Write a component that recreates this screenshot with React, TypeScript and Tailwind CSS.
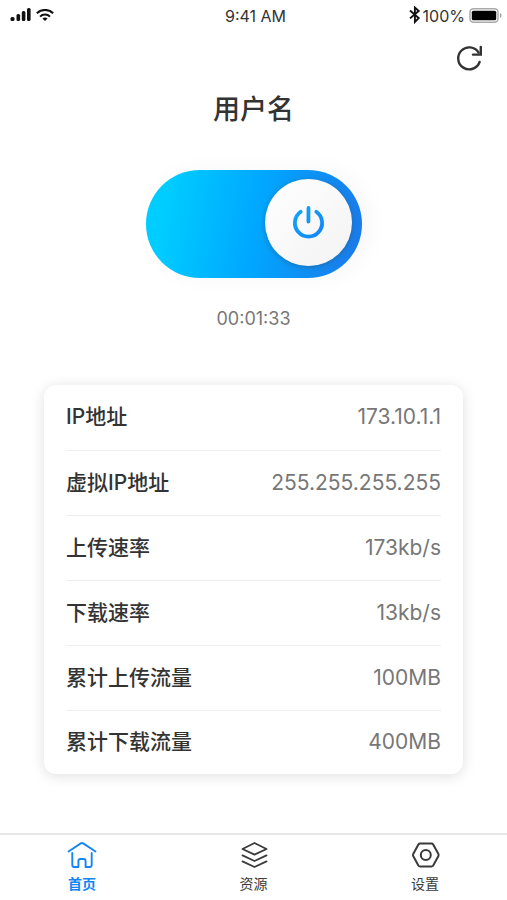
import React, { useState } from 'react';

const stats = [
  { label: 'IP地址', value: '173.10.1.1' },
  { label: '虚拟IP地址', value: '255.255.255.255' },
  { label: '上传速率', value: '173kb/s' },
  { label: '下载速率', value: '13kb/s' },
  { label: '累计上传流量', value: '100MB' },
  { label: '累计下载流量', value: '400MB' },
];

const StatusBar: React.FC = () => (
  <div className="grid grid-cols-3 items-center h-8 pl-2 pr-1 text-base text-[#333]">
    <div className="flex items-center gap-1">
      {/* Signal */}
      <svg width="24" height="16" viewBox="0 0 24 16" fill="#111">
        <rect x="2.5" y="9" width="4" height="4" rx="1.5" />
        <rect x="8.5" y="6" width="3.6" height="7" rx="1.5" />
        <rect x="13.8" y="3" width="3.6" height="10" rx="1.5" />
        <rect x="19" y="0" width="3.6" height="13" rx="1.5" />
      </svg>
      {/* Wifi */}
      <svg width="18" height="14" viewBox="0 0 18 14" fill="none" stroke="#111" strokeWidth="2">
        <path d="M0.8 4.2C5.4 -0.2 12.6 -0.2 17.2 4.2" />
        <path d="M4 7.6C6.8 4.8 11.2 4.8 14 7.6" />
        <path d="M9 12L6.4 9.4C8 8.2 10 8.2 11.6 9.4Z" fill="#111" stroke="none" />
      </svg>
    </div>
    <div className="text-center whitespace-nowrap">9:41 AM</div>
    <div className="flex items-center justify-end">
      {/* Bluetooth */}
      <svg width="12" height="20" viewBox="0 0 12 20" fill="none" stroke="#111" strokeWidth="1.9">
        <path d="M1 4.5L9.7 12.1L5.9 15.9V1.6L9.7 5L1 12.4" />
      </svg>
      <span className="ml-0.5">100%</span>
      {/* Battery */}
      <svg className="ml-1" width="34" height="16" viewBox="0 0 34 16">
        <rect x="1" y="0.8" width="28" height="13.4" rx="3.5" fill="#fff" stroke="#aaa" strokeWidth="1.5" />
        <rect x="2.8" y="2.8" width="24.4" height="9.4" rx="1.5" fill="#000" />
        <path d="M31 5C33 6 33 9 31 10Z" fill="#999" />
      </svg>
    </div>
  </div>
);

const PowerSwitch: React.FC<{ on: boolean; onToggle: () => void }> = ({ on, onToggle }) => (
  <button
    type="button"
    role="switch"
    aria-checked={on}
    aria-label="连接"
    onClick={onToggle}
    className={`flex items-start w-54 h-27 px-2.5 pt-[9px] rounded-full shadow-[8px_0_24px_rgba(0,0,0,0.04)] ${on ? 'justify-end bg-linear-[100deg,#00cdff_10%,#00a8ff_50%,#1a7cea_95%]' : 'justify-start bg-gray-300'}`}
  >
    <span className="flex items-center justify-center size-[87px] rounded-full bg-linear-to-br from-white to-[#f3f3f4] shadow-[0_1px_5px_rgba(60,60,60,0.4)]">
      <svg width="34" height="34" viewBox="0 0 34 34" fill="none" stroke="url(#power)" strokeWidth="3.8" strokeLinecap="round">
        <defs>
          <linearGradient id="power" gradientUnits="userSpaceOnUse" x1="2" y1="4" x2="32" y2="32">
            <stop offset="0%" stopColor="#12a4fb" />
            <stop offset="100%" stopColor="#1484f6" />
          </linearGradient>
        </defs>
        <path d="M17.5 2L17.4 15.5" />
        <path d="M9.7 5.8A13.6 13.6 0 1 0 25.3 5.8" />
      </svg>
    </span>
  </button>
);

const HomeIcon = () => (
  <svg width="30" height="28" viewBox="0 0 30 28" fill="none" stroke="currentColor" strokeWidth="1.9" strokeLinecap="round" strokeLinejoin="round">
    <path d="M1.5 10.5L13.8 2.4Q15 1.6 16.2 2.4L28.5 10.5" />
    <path d="M5.3 12V24Q5.3 26 7.3 26H11.4V20Q11.4 18 13.4 18H16.6Q18.6 18 18.6 20V26H22.7Q24.7 26 24.7 24V12" />
  </svg>
);

const LayersIcon = () => (
  <svg width="30" height="28" viewBox="0 0 30 28" fill="none" stroke="currentColor" strokeWidth="1.8" strokeLinecap="round" strokeLinejoin="round">
    <path d="M15.5 2L27.5 8L15.5 13.6L3.5 8Z" />
    <path d="M3.5 14.4L15.5 20L27.5 14.4" />
    <path d="M3.5 20.4L15.5 26L27.5 20.4" />
  </svg>
);

const SettingsIcon = () => (
  <svg width="30" height="28" viewBox="0 0 30 28" fill="none" stroke="currentColor" strokeWidth="2" strokeLinejoin="round">
    <path d="M10.2 2.4H21.4Q22.6 2.4 23.2 3.4L28.4 13Q28.8 14 28.4 15L23.2 24.6Q22.6 25.6 21.4 25.6H10.2Q9 25.6 8.4 24.6L3.2 15Q2.8 14 3.2 13L8.4 3.4Q9 2.4 10.2 2.4Z" />
    <circle cx="15.8" cy="14" r="5" />
  </svg>
);

const tabs = [
  { id: 'home', label: '首页', Icon: HomeIcon },
  { id: 'resource', label: '资源', Icon: LayersIcon },
  { id: 'settings', label: '设置', Icon: SettingsIcon },
];

const App: React.FC = () => {
  const [connected, setConnected] = useState(true);
  const [tab, setTab] = useState('home');

  return (
    <div className="min-h-screen flex flex-col bg-white font-['Inter','Noto_Sans_CJK_SC',sans-serif]">
      <StatusBar />

      <main className="flex-1 flex flex-col items-center">
        <div className="self-stretch flex justify-end px-5 pt-2">
          <button type="button" aria-label="刷新" className="p-1 text-[#333]">
            <svg width="28" height="28" viewBox="0 0 28 28" fill="none" stroke="currentColor" strokeWidth="2.4" strokeLinecap="round">
              <path d="M24.6 18A11 11 0 1 1 23.6 8.6" />
              <path d="M25.8 3V10.6H18" />
            </svg>
          </button>
        </div>

        <h1 className="mt-3.5 text-[27px] leading-10 font-medium text-[#333]">用户名</h1>

        <div className="mt-10">
          <PowerSwitch on={connected} onToggle={() => setConnected(!connected)} />
        </div>

        <div className="mt-[27px] text-lg leading-7 text-[#777]">00:01:33</div>

        {/* Connection stats */}
        <div className="self-stretch mt-13 mx-11 px-[22px] rounded-xl bg-white shadow-[0_2px_14px_rgba(0,0,0,0.13)]">
          <table className="w-full">
            <tbody>
              {stats.map(({ label, value }) => (
                <tr key={label} className="h-[65px] border-b border-[#eee] last:h-16 last:border-b-0">
                  <th scope="row" className="p-0 text-left text-[21px] leading-8 font-medium text-[#333]">{label}</th>
                  <td className="p-0 text-right text-[21px] leading-8 text-[#777]">{value}</td>
                </tr>
              ))}
            </tbody>
          </table>
        </div>
      </main>

      <nav className="flex justify-between px-16 pt-1.5 pb-1 mt-6 border-t-2 border-[#e8e8e8]">
        {tabs.map(({ id, label, Icon }) => (
          <button
            key={id}
            type="button"
            onClick={() => setTab(id)}
            className={`flex flex-col items-center gap-[3px] w-9 text-sm leading-6 ${tab === id ? 'font-bold text-[#1485f5]' : 'text-[#3a3a3a]'}`}
          >
            <Icon />
            {label}
          </button>
        ))}
      </nav>
    </div>
  );
};

export default App;
